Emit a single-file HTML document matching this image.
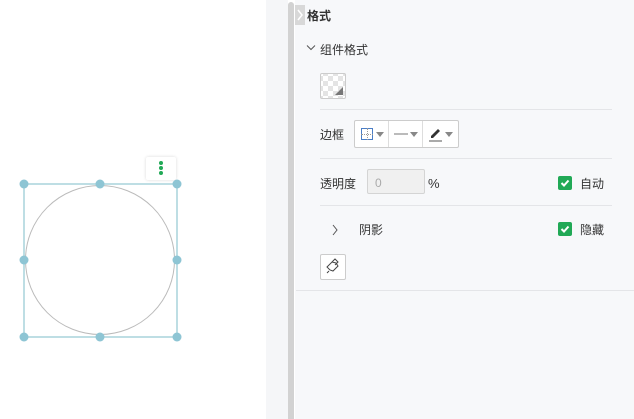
<!DOCTYPE html><html><head><meta charset="utf-8"><style>
body{margin:0;width:634px;height:419px;position:relative;overflow:hidden;background:#fff;font-family:"Liberation Sans","Noto Sans CJK SC",sans-serif;font-size:12px;color:#333}
.a{position:absolute}
.t{position:absolute;font-size:12px;color:#333;line-height:14px}
.hr{position:absolute;height:1px;background:#e4e5e8}
.cb{position:absolute;width:14px;height:14px;background:#21a956;border-radius:2px}
.btn{position:absolute;border:1px solid #ccc;background:#fff;border-radius:2px}
</style></head><body>
<div class="a" style="left:266px;top:0;width:22px;height:419px;background:#f5f6f8"></div>
<div class="a" style="left:288px;top:2px;width:6px;height:417px;background:#d2d2d2;border-radius:3px 3px 0 0"></div>
<div class="a" style="left:295px;top:0;width:339px;height:419px;background:#f7f8fa"></div>
<div class="a" style="left:295px;top:5px;width:10px;height:20px;background:#d8d8d8"></div>
<svg class="a" style="left:296px;top:9px" width="8" height="12"><path d="M2 1l4 5-4 5" stroke="#fff" stroke-width="1.5" fill="none"/></svg>
<div class="t" style="left:307px;top:9px;font-weight:bold">格式</div>
<svg class="a" style="left:306px;top:44px" width="10" height="8"><path d="M1 1.5l4 4 4-4" stroke="#555" stroke-width="1" fill="none"/></svg>
<div class="t" style="left:320px;top:43px">组件格式</div>
<div class="btn" style="left:320px;top:73px;width:24px;height:24px;background:repeating-conic-gradient(#e4e4e4 0 25%,#fff 0 50%) 2px 2px/10px 10px"></div>
<svg class="a" style="left:335px;top:87px" width="8" height="8"><path d="M8 0V8H0Z" fill="#777"/></svg>
<div class="hr" style="left:320px;top:109px;width:292px"></div>
<div class="t" style="left:320px;top:128px">边框</div>
<div class="btn" style="left:354px;top:120px;width:103px;height:26px"></div>
<div class="a" style="left:388px;top:121px;width:1px;height:26px;background:#ddd"></div>
<div class="a" style="left:422px;top:121px;width:1px;height:26px;background:#ddd"></div>
<div class="a" style="left:361px;top:128px;width:12px;height:12px;border:1px solid #4a7ec7;box-sizing:border-box;background:linear-gradient(#fff,#fff) padding-box"></div>
<div class="a" style="left:367px;top:128px;width:0;height:12px;border-left:1px dotted #999"></div>
<div class="a" style="left:361px;top:134px;width:12px;height:0;border-top:1px dotted #999"></div>
<svg class="a" style="left:376px;top:132px" width="8" height="5"><path d="M0 0h8L4 5z" fill="#888"/></svg>
<div class="a" style="left:394px;top:133px;width:14px;height:2px;background:#bbb"></div>
<svg class="a" style="left:410px;top:132px" width="8" height="5"><path d="M0 0h8L4 5z" fill="#888"/></svg>
<svg class="a" style="left:428px;top:126px" width="14" height="16"><path d="M3 10l7-7 2 2-7 7H3z" fill="#333"/><rect x="1" y="14" width="13" height="2" fill="#aaa"/></svg>
<svg class="a" style="left:445px;top:132px" width="8" height="5"><path d="M0 0h8L4 5z" fill="#888"/></svg>
<div class="hr" style="left:320px;top:158px;width:292px"></div>
<div class="t" style="left:320px;top:177px">透明度</div>
<div class="a" style="left:367px;top:169px;width:58px;height:25px;border:1px solid #d4d4d4;border-radius:2px;background:#f0f0f0;box-sizing:border-box"></div>
<div class="t" style="left:375px;top:176px;color:#aaa">0</div>
<div class="t" style="left:428px;top:177px;font-size:13px">%</div>
<div class="cb" style="left:558px;top:176px"></div>
<svg class="a" style="left:558px;top:176px" width="14" height="14"><path d="M3.5 7l2.5 2.5 4.5-5" stroke="#fff" stroke-width="2" fill="none"/></svg>
<div class="t" style="left:580px;top:177px">自动</div>
<div class="hr" style="left:320px;top:205px;width:292px"></div>
<svg class="a" style="left:331px;top:224px" width="8" height="12"><path d="M2 1l4 5-4 5" stroke="#555" stroke-width="1" fill="none"/></svg>
<div class="t" style="left:359px;top:223px">阴影</div>
<div class="cb" style="left:558px;top:222px"></div>
<svg class="a" style="left:558px;top:222px" width="14" height="14"><path d="M3.5 7l2.5 2.5 4.5-5" stroke="#fff" stroke-width="2" fill="none"/></svg>
<div class="t" style="left:580px;top:223px">隐藏</div>
<div class="btn" style="left:320px;top:254px;width:24px;height:24px"></div>
<svg class="a" style="left:325px;top:258px" width="16" height="16"><path d="M2 9l5-5 4 1 2 3-5 5-3-1z M7 4l3-3 3 3-3 3 M4 13l-2 2" stroke="#444" stroke-width="1" fill="none"/></svg>
<div class="hr" style="left:296px;top:290px;width:338px"></div>
<div class="a" style="left:146px;top:157px;width:30px;height:23px;background:#fff;box-shadow:0 0 3px rgba(0,0,0,.15);border-radius:2px"></div>
<div class="a" style="left:159px;top:161px;width:4px;height:4px;border-radius:2px;background:#21a956;box-shadow:0 5px 0 #21a956,0 10px 0 #21a956"></div>
<svg class="a" style="left:0;top:150px" width="200" height="200">
<rect x="24" y="34" width="153" height="153" fill="none" stroke="#a9d3db" stroke-width="1.5"/>
<circle cx="100" cy="110" r="74.5" fill="none" stroke="#bbb" stroke-width="1"/>
<g fill="#8ec5d4"><circle cx="24" cy="34" r="4.5"/><circle cx="100" cy="34" r="4.5"/><circle cx="177" cy="34" r="4.5"/><circle cx="24" cy="110" r="4.5"/><circle cx="177" cy="110" r="4.5"/><circle cx="24" cy="187" r="4.5"/><circle cx="100" cy="187" r="4.5"/><circle cx="177" cy="187" r="4.5"/></g>
</svg>
</body></html>
